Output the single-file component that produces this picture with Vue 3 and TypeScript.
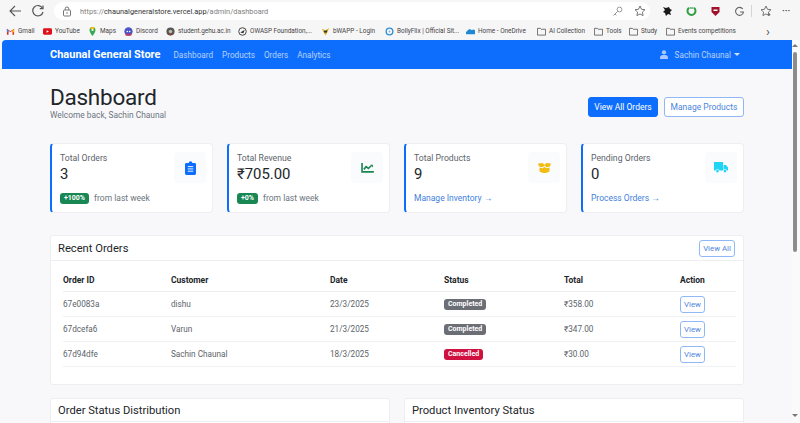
<template>
  <div class="window">
    <header class="chrome">
      <div class="toolbar">
        <svg class="tool back" width="14" height="14" viewBox="0 0 14 14"><path d="M13 7H2M7 2 2 7l5 5" fill="none" stroke="#555" stroke-width="1.1"/></svg>
        <svg class="tool reload" width="14" height="14" viewBox="0 0 14 14"><path d="M11.5 4.2A5.2 5.2 0 1 0 12 8" fill="none" stroke="#555" stroke-width="1.2"/><path d="M12 1.5v3.2H8.8" fill="none" stroke="#555" stroke-width="1.2"/></svg>
        <div class="address">
          <svg width="10" height="11" viewBox="0 0 10 11"><rect x="1.5" y="4" width="7" height="6" rx="1" fill="none" stroke="#777"/><path d="M3.2 4V2.8a1.8 1.8 0 0 1 3.6 0V4" fill="none" stroke="#777"/><circle cx="5" cy="7" r=".8" fill="#777"/></svg>
          <span class="url"><span class="dim">https://</span>chaunalgeneralstore.vercel.app<span class="dim">/admin/dashboard</span></span>
          <svg class="key" width="11" height="11" viewBox="0 0 11 11"><circle cx="7.5" cy="3.5" r="2.4" fill="none" stroke="#999"/><path d="M5.800 5.200 1.500 9.500M3 8l1.300 1.300" stroke="#999" fill="none"/></svg>
          <svg class="star" width="12" height="12" viewBox="0 0 12 12"><path d="m6 1 1.500 3.300 3.500.4-2.600 2.400.7 3.500L6 8.900l-3.100 1.700.7-3.500L1 4.700l3.500-.4z" fill="none" stroke="#666" stroke-width=".9"/></svg>
        </div>
        <div class="extensions">
          <svg width="11" height="11" viewBox="0 0 11 11"><path d="M1 1l3 1 3-1 1 2 2 1-2 2 1 3-3-1-2 2-1-3-2-1 2-2z" fill="#1a1a1a"/></svg>
          <svg width="11" height="11" viewBox="0 0 11 11"><path d="M3 1.800a4 4 0 1 0 5 0" fill="none" stroke="#2f9e44" stroke-width="2"/><rect x="3.500" y="1" width="4" height="2" fill="#7cc48d"/></svg>
          <svg width="11" height="11" viewBox="0 0 11 11"><path d="M1.500 1h8v5l-4 4-4-4z" fill="#a1122a"/><rect x="3.500" y="3.500" width="4" height="1.500" fill="#fff"/></svg>
          <svg width="11" height="11" viewBox="0 0 11 11"><path d="M8.800 3a4 4 0 1 0 .7 3H6" fill="none" stroke="#666" stroke-width="1.100"/></svg>
          <i class="sep"></i>
          <svg class="fav-star" width="12" height="12" viewBox="0 0 12 12"><path d="m6 1 1.500 3.300 3.500.4-2.600 2.400.7 3.500L6 8.900l-3.100 1.700.7-3.500L1 4.700l3.500-.4z" fill="none" stroke="#666" stroke-width=".9"/><path d="M9 8v3M7.500 9.500h3" stroke="#666" stroke-width=".8"/></svg>
          <span class="more">···</span>
        </div>
      </div>
      <div class="bookmarks">
        <span v-for="b in bookmarks" :key="b.label" class="bookmark" :style="{ width: b.width + 'px' }">
          <svg width="9" height="9" viewBox="0 0 10 10" class="fav">
            <g v-if="b.icon === 'gmail'"><path d="M1 2v6.500h1.800V4L5 5.800 7.200 4v4.500H9V2L5 4.800z" fill="#d93025"/><path d="M1 2v3l1.800 1V4z" fill="#4285f4"/><path d="M7.200 4v3L9 5V2z" fill="#fbbc04"/></g>
            <g v-else-if="b.icon === 'youtube'"><rect y="1.500" width="10" height="7" rx="1.500" fill="#e0101a"/><path d="M4 3.500v3L6.600 5z" fill="#fff"/></g>
            <g v-else-if="b.icon === 'maps'"><path d="M5 0a3.300 3.300 0 0 1 3.300 3.300C8.300 6 5 10 5 10S1.700 6 1.700 3.300A3.300 3.300 0 0 1 5 0z" fill="#34a853"/><path d="M2.300 1.500 5 3.300 7.500 1A3.300 3.300 0 0 0 2.300 1.500z" fill="#fbbc04"/><circle cx="5" cy="3.300" r="1.200" fill="#fff"/></g>
            <g v-else-if="b.icon === 'discord'"><circle cx="5" cy="5" r="4.600" fill="#4a55c8"/><path d="M1.800 7.500h6.400V9.500H1.800z" fill="#c9304a"/><circle cx="3.700" cy="5" r=".9" fill="#fff"/><circle cx="6.300" cy="5" r=".9" fill="#fff"/></g>
            <g v-else-if="b.icon === 'student'"><circle cx="5" cy="5" r="4.500" fill="#555"/><circle cx="5" cy="5" r="2" fill="#c0b9a8"/><path d="M2.500 7.500h5L5 9.500z" fill="#a33"/></g>
            <g v-else-if="b.icon === 'owasp'"><circle cx="5" cy="5" r="4.200" fill="none" stroke="#333" stroke-width="1"/><path d="M2.500 6 7.500 3 6 7z" fill="#333"/></g>
            <g v-else-if="b.icon === 'bwapp'"><path d="M1 2l4 1.500L9 1 7 6l-2 3.500L3 6z" fill="#d8b32a"/><path d="M3 4.500 7 3.500 6.500 6 4 6.500z" fill="#333"/></g>
            <g v-else-if="b.icon === 'bolly'"><circle cx="5" cy="5" r="3.700" fill="none" stroke="#2f8fd8" stroke-width="1.500"/><circle cx="5" cy="5" r="1" fill="#7ab8e8"/></g>
            <g v-else-if="b.icon === 'onedrive'"><path d="M.5 8a1.800 1.800 0 0 1 .8-3.300A3 3 0 0 1 6.500 3.500 2.400 2.400 0 0 1 9.600 8z" fill="#1e88d2"/></g>
            <path v-else d="M.5 9V1.500h3.200l1 1h4.800V9z" fill="none" stroke="#555" stroke-width=".9"/>
          </svg>
          {{ b.label }}
        </span>
        <span class="bm-next">›</span>
      </div>
    </header>

    <div class="viewport">
      <div class="page">
        <nav class="navbar">
          <span class="brand">Chaunal General Store</span>
          <a v-for="l in navLinks" :key="l" class="nav-link">{{ l }}</a>
          <span class="user">
            <svg width="8" height="9" viewBox="0 0 9 10"><circle cx="4.500" cy="2.600" r="2.400" fill="#a9c8ff"/><path d="M0 10V8.400C0 6.600 1.400 5.600 3 5.600h3c1.600 0 3 1 3 2.800V10z" fill="#a9c8ff"/></svg>
            <span class="user-name">Sachin Chaunal</span>
            <i class="caret"></i>
          </span>
        </nav>

        <main class="content">
          <section class="head">
            <div>
              <h1>Dashboard</h1>
              <p>Welcome back, Sachin Chaunal</p>
            </div>
            <div class="head-actions">
              <button class="btn primary">View All Orders</button>
              <button class="btn outline">Manage Products</button>
            </div>
          </section>

          <section class="stats">
            <article class="stat">
              <div class="stat-top">
                <div>
                  <div class="stat-label">Total Orders</div>
                  <div class="stat-value">3</div>
                </div>
                <div class="stat-icon">
                  <svg width="11" height="14" viewBox="0 0 12 15"><path d="M1.500 2H4a2 2 0 0 1 4 0h2.500A1.500 1.500 0 0 1 12 3.500v10a1.500 1.500 0 0 1-1.500 1.500h-9A1.500 1.500 0 0 1 0 13.500v-10A1.500 1.500 0 0 1 1.500 2z" fill="#0d6efd"/><path d="M3 6h6M3 8.500h6M3 11h6" stroke="#fff" stroke-width="1"/></svg>
                </div>
              </div>
              <div class="stat-foot"><span class="pill">+100%</span><span class="muted">from last week</span></div>
            </article>
            <article class="stat">
              <div class="stat-top">
                <div>
                  <div class="stat-label">Total Revenue</div>
                  <div class="stat-value">₹705.00</div>
                </div>
                <div class="stat-icon">
                  <svg width="13" height="10" viewBox="0 0 14 11"><path d="M1 0v9.800h13" fill="none" stroke="#198754" stroke-width="1.800"/><path d="M3 7l2.500-3 2.500 2 3-3" fill="none" stroke="#198754" stroke-width="1.800"/><path d="M10 2h3v3z" fill="#198754"/></svg>
                </div>
              </div>
              <div class="stat-foot"><span class="pill">+0%</span><span class="muted">from last week</span></div>
            </article>
            <article class="stat">
              <div class="stat-top">
                <div>
                  <div class="stat-label">Total Products</div>
                  <div class="stat-value">9</div>
                </div>
                <div class="stat-icon">
                  <svg width="13" height="10" viewBox="0 0 13 10"><path d="M0 .5 4.500 0l2 1.800L8.500 0 13 .5 12 3.500 8.500 4.300 6.500 2.500 4.500 4.300 1 3.500z" fill="#f2bd13"/><path d="M1.500 4.600 4.800 5.300 6.500 3.800l1.700 1.500 3.300-.7V8.500L8 10H5L1.500 8.500z" fill="#f2bd13"/></svg>
                </div>
              </div>
              <div class="stat-foot"><a class="link">Manage Inventory →</a></div>
            </article>
            <article class="stat">
              <div class="stat-top">
                <div>
                  <div class="stat-label">Pending Orders</div>
                  <div class="stat-value">0</div>
                </div>
                <div class="stat-icon">
                  <svg width="14" height="11" viewBox="0 0 14 11"><path d="M0 0h9v8.500H0zM9.500 3H12l2 2.500v3H9.500z" fill="#1fd5f5"/><circle cx="3.500" cy="9" r="1.700" fill="#1fd5f5" stroke="#fff" stroke-width=".6"/><circle cx="11" cy="9" r="1.700" fill="#1fd5f5" stroke="#fff" stroke-width=".6"/></svg>
                </div>
              </div>
              <div class="stat-foot"><a class="link">Process Orders →</a></div>
            </article>
          </section>

          <section class="card orders">
            <div class="card-header">
              <h2>Recent Orders</h2>
              <button class="btn outline small">View All</button>
            </div>
            <div class="card-body">
              <table>
                <colgroup>
                  <col class="c-id" /><col class="c-customer" /><col class="c-date" /><col class="c-status" /><col class="c-total" /><col />
                </colgroup>
                <thead>
                  <tr><th>Order ID</th><th>Customer</th><th>Date</th><th>Status</th><th>Total</th><th>Action</th></tr>
                </thead>
                <tbody>
                  <tr v-for="o in orders" :key="o.id">
                    <td>{{ o.id }}</td>
                    <td>{{ o.customer }}</td>
                    <td>{{ o.date }}</td>
                    <td><span class="status" :class="o.status.toLowerCase()">{{ o.status }}</span></td>
                    <td>₹{{ o.total }}</td>
                    <td><button class="btn outline view">View</button></td>
                  </tr>
                </tbody>
              </table>
            </div>
          </section>

          <section class="bottom">
            <div class="card"><div class="card-header"><h2>Order Status Distribution</h2></div></div>
            <div class="card"><div class="card-header"><h2>Product Inventory Status</h2></div></div>
          </section>
        </main>
      </div>

      <aside class="scrollbar">
        <i class="arrow up"></i>
        <i class="thumb"></i>
        <i class="arrow down"></i>
      </aside>
    </div>
  </div>
</template>

<script setup lang="ts">
interface Bookmark {
  label: string;
  width: number;
  icon: string;
}

interface Order {
  id: string;
  customer: string;
  date: string;
  status: string;
  total: string;
}

const navLinks = ['Dashboard', 'Products', 'Orders', 'Analytics'];

const bookmarks: Bookmark[] = [
  { label: 'Gmail', width: 37, icon: 'gmail' },
  { label: 'YouTube', width: 45, icon: 'youtube' },
  { label: 'Maps', width: 36, icon: 'maps' },
  { label: 'Discord', width: 42, icon: 'discord' },
  { label: 'student.gehu.ac.in', width: 72, icon: 'student' },
  { label: 'OWASP Foundation,...', width: 83, icon: 'owasp' },
  { label: 'bWAPP - Login', width: 64, icon: 'bwapp' },
  { label: 'BollyFlix | Official Sit...', width: 81, icon: 'bolly' },
  { label: 'Home - OneDrive', width: 71, icon: 'onedrive' },
  { label: 'AI Collection', width: 57, icon: 'folder' },
  { label: 'Tools', width: 35, icon: 'folder' },
  { label: 'Study', width: 37, icon: 'folder' },
  { label: 'Events competitions', width: 80, icon: 'folder' }
];

const orders: Order[] = [
  { id: '67e0083a', customer: 'dishu', date: '23/3/2025', status: 'Completed', total: '358.00' },
  { id: '67dcefa6', customer: 'Varun', date: '21/3/2025', status: 'Completed', total: '347.00' },
  { id: '67d94dfe', customer: 'Sachin Chaunal', date: '18/3/2025', status: 'Cancelled', total: '30.00' }
];
</script>

<style>
html, body {
  margin: 0;
  overflow: hidden;
}
</style>

<style scoped>
.window {
  width: 800px;
  height: 423px;
  display: flex;
  flex-direction: column;
  overflow: hidden;
  background: #f8f8fb;
  font-family: Roboto, "Noto Sans", sans-serif;
  color: #212529;
}

.chrome {
  height: 40px;
  flex: none;
  background: #f7f6f7;
}

.toolbar {
  height: 22px;
  display: flex;
  align-items: center;
  padding-left: 8px;
}

.tool.reload {
  margin-left: 9px;
}

.address {
  flex: none;
  margin-left: 9px;
  width: 596px;
  height: 18px;
  background: #fff;
  border-radius: 9px;
  display: flex;
  align-items: center;
  padding: 0 4px 0 8px;
  box-sizing: border-box;
}

.url {
  margin-left: 8px;
  font-size: 7.400px;
  color: #333;
  flex: 1;
}

.dim {
  color: #808080;
}

.key {
  margin-right: 11px;
}

.extensions {
  display: flex;
  align-items: center;
  gap: 13px;
  margin-left: 12px;
}

.sep {
  width: 1px;
  height: 12px;
  background: #d5d5d5;
  margin: 0 -5px 0 -7px;
}

.more {
  font-size: 9px;
  font-weight: 700;
  color: #555;
  margin-left: -3px;
}

.bookmarks {
  height: 18px;
  display: flex;
  align-items: center;
  padding-left: 6px;
  font-size: 6.400px;
  color: #444;
}

.bookmark {
  display: flex;
  align-items: center;
  gap: 3px;
  white-space: nowrap;
  flex: none;
  overflow: hidden;
}

.fav {
  flex: none;
}

.bm-next {
  margin-left: 20px;
  font-size: 13px;
  line-height: 1;
  color: #555;
}

.viewport {
  flex: 1;
  min-height: 0;
  display: flex;
  padding-left: 2px;
}

.page {
  flex: 1;
  min-width: 0;
  overflow: hidden;
}

.navbar {
  height: 29px;
  background: #0d6efd;
  border-top-left-radius: 4px;
  display: flex;
  align-items: center;
  padding: 0 52px 0 48px;
  font-size: 8.200px;
}

.brand {
  font-size: 11px;
  font-weight: 700;
  color: #fff;
  margin-right: 13px;
}

.nav-link {
  color: #b6d2fe;
  margin-right: 9px;
}

.user {
  margin-left: auto;
  display: flex;
  align-items: center;
  gap: 3px;
  color: #b6d2fe;
}

.user-name {
  margin-left: 4px;
}

.caret {
  width: 0;
  height: 0;
  border: 3px solid transparent;
  border-top-color: #cfe0ff;
  border-bottom: 0;
}

.content {
  padding: 0 48px;
}

.head {
  height: 74px;
  display: flex;
  justify-content: space-between;
  align-items: flex-start;
  padding-top: 15px;
  box-sizing: border-box;
}

h1 {
  margin: 0;
  font-size: 22.500px;
  letter-spacing: -0.25px;
  font-weight: 400;
  line-height: 26px;
}

.head p {
  margin: 0;
  font-size: 8.400px;
  line-height: 11px;
  color: #6c757d;
}

.head-actions {
  display: flex;
  gap: 6px;
  margin-top: 13px;
}

.btn {
  font-family: inherit;
  font-size: 8.500px;
  height: 20px;
  padding: 0;
  border-radius: 3px;
  border: 1px solid #0d6efd;
  background: transparent;
  color: #0d6efd;
  white-space: nowrap;
}

.head-actions .btn.primary {
  width: 70px;
  background: #0d6efd;
  color: #fff;
}

.head-actions .btn.outline {
  width: 80px;
}

.btn.outline {
  background: #fff;
  border-color: #8fb8f6;
  color: #4d85de;
}

.btn.small {
  height: 17px;
  width: 36px;
  font-size: 7.800px;
}

.stats {
  display: grid;
  grid-template-columns: repeat(4, 163px);
  column-gap: 14px;
}

.stat {
  height: 70px;
  box-sizing: border-box;
  background: #fff;
  border: 1px solid #eceef1;
  border-left: 2px solid #0d6efd;
  border-radius: 4px;
  padding: 8px 6px 8px 8px;
  display: flex;
  flex-direction: column;
  justify-content: space-between;
}

.stat-top {
  display: flex;
  justify-content: space-between;
}

.stat-label {
  font-size: 8.700px;
  line-height: 12px;
  color: #5c636a;
}

.stat-value {
  font-size: 14.900px;
  line-height: 21px;
  color: #212529;
}

.stat-icon {
  width: 32px;
  height: 31px;
  display: flex;
  align-items: center;
  justify-content: center;
  background: #fafbfd;
  border-radius: 4px;
}

.stat-foot {
  display: flex;
  align-items: center;
  gap: 5px;
  font-size: 8.500px;
  line-height: 12px;
}

.pill {
  background: #198754;
  color: #fff;
  font-size: 7px;
  font-weight: 700;
  line-height: 9px;
  padding: 1px 4px;
  border-radius: 3px;
}

.muted {
  color: #6c757d;
}

.link {
  color: #3f7fe0;
}

.card {
  background: #fff;
  border: 1px solid #eceef1;
  border-radius: 3px;
  box-sizing: border-box;
}

.orders {
  margin-top: 22px;
  height: 150px;
}

.card-header {
  height: 25px;
  box-sizing: border-box;
  display: flex;
  align-items: center;
  justify-content: space-between;
  padding: 0 8px 0 7px;
  border-bottom: 1px solid #eceef1;
}

h2 {
  margin: 0;
  font-size: 11.200px;
  font-weight: 400;
  color: #212529;
}

.card-body {
  padding: 8px 7px 0 12px;
}

table {
  width: 100%;
  table-layout: fixed;
  border-collapse: collapse;
  font-size: 8.200px;
}

.c-id {
  width: 108px;
}

.c-customer {
  width: 159px;
}

.c-date {
  width: 114px;
}

.c-status {
  width: 120px;
}

.c-total {
  width: 116px;
}

th {
  height: 22px;
  text-align: left;
  font-size: 8.500px;
  font-weight: 700;
  color: #212529;
  border-bottom: 1px solid #eceef1;
  padding: 1px 0 0;
  box-sizing: border-box;
}

td {
  height: 25px;
  padding: 0;
  color: #5c636a;
  border-bottom: 1px solid #eff1f3;
  box-sizing: border-box;
}

.status {
  display: inline-block;
  color: #fff;
  font-size: 7px;
  font-weight: 700;
  line-height: 11px;
  padding: 0 4px;
  border-radius: 3px;
}

.completed {
  background: #6c6e76;
}

.cancelled {
  background: #d0103f;
}

.btn.view {
  height: 17px;
  width: 25px;
  padding: 0;
  font-size: 7.800px;
  display: block;
  margin-top: 1px;
}

.bottom {
  margin-top: 13px;
  display: grid;
  grid-template-columns: 340px 340px;
  column-gap: 14px;
}

.bottom .card {
  height: 40px;
}

.bottom .card-header {
  height: 23px;
}

.scrollbar {
  width: 8px;
  flex: none;
  position: relative;
  background: #fafafa;
}

.thumb {
  position: absolute;
  left: 1px;
  top: 12px;
  width: 4px;
  height: 200px;
  border-radius: 2px;
  background: #8c8c8c;
}

.arrow {
  position: absolute;
  left: 0;
  width: 0;
  height: 0;
  border: 3px solid transparent;
}

.arrow.up {
  top: 4px;
  border-top: 0;
  border-bottom-color: #777;
}

.arrow.down {
  bottom: 6px;
  border-bottom: 0;
  border-top-color: #777;
}
</style>
